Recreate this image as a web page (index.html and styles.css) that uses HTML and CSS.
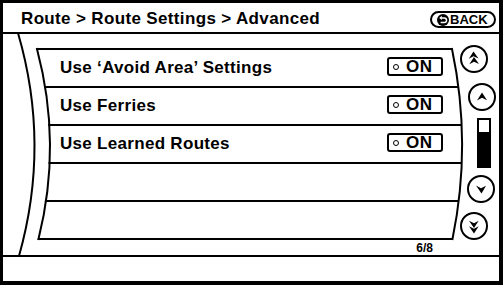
FILE: index.html
```html
<!DOCTYPE html>
<html lang="en">
<head>
<meta charset="utf-8">
<title>Route Settings - Advanced</title>
<link rel="stylesheet" href="styles.css">
</head>
<body>
<div class="screen">
  <header class="topbar">
    <h1 class="title">Route &gt; Route Settings &gt; Advanced</h1>
    <button class="back" type="button">
      <svg class="back-icon" viewBox="0 0 12 12" width="12" height="12" aria-hidden="true">
        <circle cx="6" cy="6" r="6" fill="#000"/>
        <path d="M4.6 3.9 H7.3 A2.25 2.25 0 0 1 7.3 8.4 H3.6" fill="none" stroke="#fff" stroke-width="1.5"/>
        <polygon points="2.2,3.9 4.9,1.8 4.9,6" fill="#fff"/>
      </svg>
      <span>BACK</span>
    </button>
  </header>
  <main class="content">
    <svg class="frame" viewBox="0 0 496 220" width="496" height="220" aria-hidden="true">
      <path d="M15 -1 Q47.5 110.5 16 222" fill="none" stroke="#000" stroke-width="2"/>
      <path d="M34 15 Q59.25 110 35.5 205" fill="none" stroke="#000" stroke-width="2" stroke-linecap="square"/>
      <path d="M449 15 Q469 110 449.5 205" fill="none" stroke="#000" stroke-width="2" stroke-linecap="square"/>
    </svg>
    <div class="list-col">
      <ul class="list">
        <li class="row"><span class="label">Use ‘Avoid Area’ Settings</span><span class="toggle"><span class="dot"></span>ON</span></li>
        <li class="row"><span class="label">Use Ferries</span><span class="toggle"><span class="dot"></span>ON</span></li>
        <li class="row"><span class="label">Use Learned Routes</span><span class="toggle"><span class="dot"></span>ON</span></li>
        <li class="row"></li>
        <li class="row"></li>
      </ul>
      <div class="page">6/8</div>
    </div>
    <div class="scroll">
      <button class="round c1" type="button" aria-label="Page up">
        <svg viewBox="0 0 24 24" width="24" height="24"><path d="M11.5 4.5 L16.5 11.5 L11.5 9.3 L6.8 11.8 Z M12 10 L17 17 L12 14.8 L7.3 17.3 Z" fill="#000"/></svg>
      </button>
      <button class="round c2" type="button" aria-label="Up">
        <svg viewBox="0 0 24 24" width="24" height="24"><path d="M12 7.5 L17 15.2 L12 12.8 L7 15.5 Z" fill="#000"/></svg>
      </button>
      <div class="track"><div class="thumb"></div></div>
      <button class="round c3" type="button" aria-label="Down">
        <svg viewBox="0 0 24 24" width="24" height="24"><path d="M12.5 16.5 L17 8.8 L12 11.2 L7 8.5 Z" fill="#000"/></svg>
      </button>
      <button class="round c4" type="button" aria-label="Page down">
        <svg viewBox="0 0 24 24" width="24" height="24"><path d="M12 14 L16.7 6.8 L12 9.2 L7 6.7 Z M12 19.5 L16.7 12.3 L12 14.7 L7 12.2 Z" fill="#000"/></svg>
      </button>
    </div>
  </main>
  <footer class="footbar"></footer>
</div>
</body>
</html>
```
FILE: styles.css
```css
html, body {
  margin: 0;
  padding: 0;
  background: #fff;
}

body {
  font-family: "Liberation Sans", Arial, sans-serif;
  color: #000;
}

.screen {
  width: 503px;
  height: 285px;
  box-sizing: border-box;
  border-style: solid;
  border-color: #000;
  border-width: 3px 4px 4px 3px;
  display: flex;
  flex-direction: column;
  background: #fff;
}

/* Header */
.topbar {
  height: 31px;
  flex: none;
  box-sizing: border-box;
  padding: 3px 3px 0 18px;
  border-bottom: 2px solid #000;
  display: flex;
  justify-content: space-between;
  align-items: flex-start;
}

.title {
  margin: 0;
  font-size: 17px;
  font-weight: bold;
  line-height: 26px;
  letter-spacing: 0.35px;
}

.back {
  margin-top: 5px;
  width: 66px;
  height: 17px;
  box-sizing: border-box;
  border: 2px solid #000;
  border-radius: 9px;
  background: #fff;
  color: #000;
  padding: 0 0 0 5px;
  display: flex;
  align-items: center;
  gap: 1px;
  font-family: "Liberation Sans", Arial, sans-serif;
  font-size: 13px;
  font-weight: bold;
  line-height: 13px;
}

.back-icon {
  display: block;
  flex: none;
}

/* Main */
.content {
  flex: 1;
  position: relative;
  display: flex;
}

.frame {
  position: absolute;
  left: 0;
  top: 0;
  overflow: visible;
  pointer-events: none;
}

.list-col {
  margin-left: 31px;
  width: 430px;
  flex: none;
  padding-top: 14px;
}

.list {
  list-style: none;
  margin: 0;
  padding: 0;
  border-bottom: 2px solid #000;
  clip-path: path('M2 0 L418 0 Q438 96 418.5 192 L3.5 192 Q27.25 96 2 0 Z');
}

.row {
  height: 38px;
  box-sizing: border-box;
  border-top: 2px solid #000;
  padding: 0 21px 0 26px;
  display: flex;
  align-items: center;
  justify-content: space-between;
}

.label {
  font-size: 17px;
  font-weight: bold;
  line-height: 36px;
  letter-spacing: 0.3px;
}

.toggle {
  width: 56px;
  height: 19px;
  box-sizing: border-box;
  border: 2px solid #000;
  border-radius: 3px;
  margin-bottom: 3px;
  padding-left: 4px;
  display: flex;
  align-items: center;
  font-size: 17px;
  font-weight: bold;
  line-height: 15px;
  letter-spacing: 0.5px;
}

.dot {
  width: 6px;
  height: 6px;
  box-sizing: border-box;
  border: 1.4px solid #000;
  border-radius: 50%;
  margin-right: 7px;
  flex: none;
}

.page {
  margin-top: 1px;
  padding-right: 31px;
  text-align: right;
  font-size: 12px;
  font-weight: bold;
  line-height: 14px;
}

/* Scroll column */
.scroll {
  margin-left: -6px;
  width: 41px;
  flex: none;
  padding-top: 11px;
  display: flex;
  flex-direction: column;
  align-items: flex-start;
}

.round {
  width: 28px;
  height: 28px;
  box-sizing: border-box;
  border: 2px solid #000;
  border-radius: 50%;
  background: #fff;
  padding: 0;
  display: flex;
  align-items: center;
  justify-content: center;
  flex: none;
}

.round svg {
  display: block;
}

.c1 { margin-left: 2px; }
.c2 { margin-left: 10px; margin-top: 10px; }
.c3 { margin-left: 9px; margin-top: 7px; }
.c4 { margin-left: 2px; margin-top: 9px; }

.track {
  margin-left: 19px;
  margin-top: 7px;
  width: 14px;
  height: 50px;
  box-sizing: border-box;
  border: 2px solid #000;
  background: #000;
  flex: none;
}

.thumb {
  height: 12px;
  background: #fff;
}

/* Footer */
.footbar {
  height: 27px;
  flex: none;
  box-sizing: border-box;
  border-top: 2px solid #000;
}
```
